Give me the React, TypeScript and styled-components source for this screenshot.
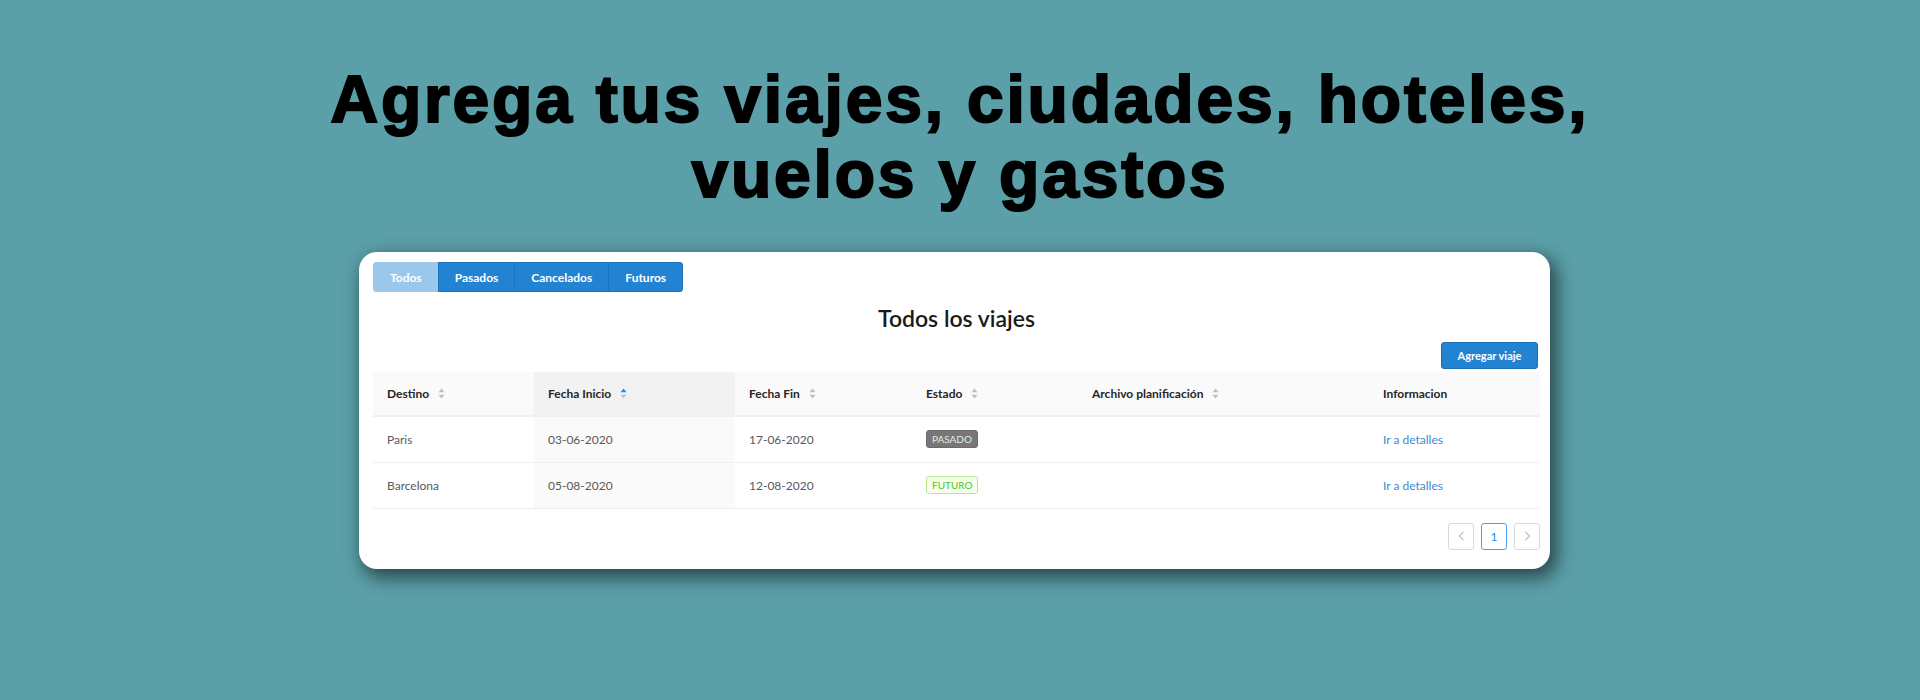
import React, { FC } from 'react';
import styled, { createGlobalStyle } from 'styled-components';

const colors = {
  page: '#5b9fa8',
  primary: '#2383d3',
  primaryLight: '#9bc8ea',
  link: '#3a8ad4',
  border: '#f0f0f0',
  headBg: '#fafafa',
  sortedBg: '#f2f2f2',
  text: '#595959',
  heading: '#262626',
};

const GlobalStyle = createGlobalStyle`
  body {
    margin: 0;
    background: ${colors.page};
    font-family: Lato, 'Noto Sans', sans-serif;
  }
`;

const Page = styled.div`
  min-height: 700px;
  display: flex;
  flex-direction: column;
  align-items: center;
  padding-top: 62px;
  box-sizing: border-box;
`;

const Headline = styled.h1`
  margin: 0;
  font-family: 'Liberation Sans', Arial, sans-serif;
  font-weight: 700;
  font-size: 66px;
  line-height: 75px;
  letter-spacing: 2.8px;
  text-align: center;
  color: #000;
  -webkit-text-stroke: 2px #000;
  width: 1400px;
`;

const Card = styled.div`
  margin-top: 40px;
  margin-right: 11px;
  width: 1191px;
  box-sizing: border-box;
  background: #fff;
  border-radius: 18px;
  padding: 10px 10px 19px 14px;
  box-shadow: 5px 7px 18px 2px rgba(0, 0, 0, 0.55);
  display: flex;
  flex-direction: column;
`;

const Tabs = styled.div`
  display: flex;
`;

const Tab = styled.button<{ $active?: boolean }>`
  height: 30px;
  padding: 0 16px;
  border: 1px solid ${(p) => (p.$active ? colors.primaryLight : '#1c74bd')};
  background: ${(p) => (p.$active ? colors.primaryLight : colors.primary)};
  color: #fff;
  font-family: Lato, sans-serif;
  font-weight: 700;
  font-size: 12px;
  margin-left: -1px;
  border-radius: 0;
  &:first-child {
    margin-left: 0;
    border-radius: 3px 0 0 3px;
  }
  &:last-child {
    border-radius: 0 3px 3px 0;
  }
`;

const Title = styled.h2`
  margin: 11px 0 0;
  font-size: 23px;
  line-height: 30px;
  font-weight: 600;
  text-align: center;
  color: #1a1a1a;
`;

const Actions = styled.div`
  display: flex;
  justify-content: flex-end;
  margin-top: 9px;
  padding-right: 2px;
`;

const PrimaryButton = styled.button`
  height: 27px;
  width: 97px;
  border: 1px solid #1a6fb8;
  border-radius: 3px;
  background: ${colors.primary};
  color: #fff;
  font-family: Lato, sans-serif;
  font-weight: 700;
  font-size: 11px;
`;

const Table = styled.table`
  margin-top: 3px;
  width: 1167px;
  border-collapse: collapse;
  table-layout: fixed;
  font-size: 12px;
`;

const Th = styled.th<{ $sorted?: boolean }>`
  height: 44px;
  padding: 0 14px;
  text-align: left;
  font-weight: 700;
  color: ${colors.heading};
  background: ${(p) => (p.$sorted ? colors.sortedBg : colors.headBg)};
  border-bottom: 2px solid ${colors.border};
  box-sizing: border-box;
`;

const Td = styled.td<{ $sorted?: boolean }>`
  height: 46px;
  padding: 0 14px;
  color: ${colors.text};
  background: ${(p) => (p.$sorted ? colors.headBg : '#fff')};
  border-bottom: 1px solid ${colors.border};
  box-sizing: border-box;
`;

const HeadInner = styled.span`
  display: inline-flex;
  align-items: center;
  gap: 9px;
`;

const Link = styled.a`
  color: ${colors.link};
  text-decoration: none;
`;

const Tag = styled.span<{ $kind: 'past' | 'future' }>`
  display: inline-block;
  height: 18px;
  line-height: 16px;
  padding: 0 5px;
  font-size: 10px;
  border-radius: 3px;
  box-sizing: border-box;
  border: 1px solid ${(p) => (p.$kind === 'past' ? '#6b6b6b' : '#b7eb8f')};
  background: ${(p) => (p.$kind === 'past' ? '#777' : '#f6ffed')};
  color: ${(p) => (p.$kind === 'past' ? '#e8e8e8' : '#52c41a')};
`;

const Pager = styled.div`
  display: flex;
  justify-content: flex-end;
  gap: 7px;
  margin-top: 14px;
`;

const PageItem = styled.div<{ $active?: boolean }>`
  width: 26px;
  height: 27px;
  box-sizing: border-box;
  border: 1px solid ${(p) => (p.$active ? '#4a9ff5' : '#d9d9d9')};
  border-radius: 3px;
  display: flex;
  align-items: center;
  justify-content: center;
  color: ${(p) => (p.$active ? '#1890ff' : '#bfbfbf')};
  font-size: 12px;
`;

const SortIcon: FC<{ active?: boolean }> = ({ active }) => (
  <svg width="7" height="11" viewBox="0 0 7 11">
    <path d="M3.5 0.5 L6.5 4.3 L0.5 4.3 Z" fill={active ? '#1890ff' : '#bfbfbf'} />
    <path d="M3.5 10.5 L6.5 6.7 L0.5 6.7 Z" fill="#bfbfbf" />
  </svg>
);

const Chevron: FC<{ dir: 'left' | 'right' }> = ({ dir }) => (
  <svg width="7" height="10" viewBox="0 0 7 10">
    <path
      d={dir === 'left' ? 'M5.5 1 L1.5 5 L5.5 9' : 'M1.5 1 L5.5 5 L1.5 9'}
      fill="none"
      stroke="#bfbfbf"
      strokeWidth="1.1"
    />
  </svg>
);

const columns = [
  { title: 'Destino', width: 161, sort: true },
  { title: 'Fecha Inicio', width: 201, sort: true, sorted: true },
  { title: 'Fecha Fin', width: 177, sort: true },
  { title: 'Estado', width: 166, sort: true },
  { title: 'Archivo planificación', width: 291, sort: true },
  { title: 'Informacion', width: 171 },
];

const trips = [
  { destino: 'Paris', inicio: '03-06-2020', fin: '17-06-2020', estado: 'past' as const },
  { destino: 'Barcelona', inicio: '05-08-2020', fin: '12-08-2020', estado: 'future' as const },
];

const App: FC = () => (
  <>
    <GlobalStyle />
    <Page>
      <Headline>
        Agrega tus viajes, ciudades, hoteles,
        <br />
        vuelos y gastos
      </Headline>
      <Card>
        <Tabs>
          <Tab $active>Todos</Tab>
          <Tab>Pasados</Tab>
          <Tab>Cancelados</Tab>
          <Tab>Futuros</Tab>
        </Tabs>
        <Title>Todos los viajes</Title>
        <Actions>
          <PrimaryButton>Agregar viaje</PrimaryButton>
        </Actions>
        <Table>
          <colgroup>
            {columns.map((c) => (
              <col key={c.title} style={{ width: c.width }} />
            ))}
          </colgroup>
          <thead>
            <tr>
              {columns.map((c) => (
                <Th key={c.title} $sorted={c.sorted}>
                  <HeadInner>
                    {c.title}
                    {c.sort && <SortIcon active={c.sorted} />}
                  </HeadInner>
                </Th>
              ))}
            </tr>
          </thead>
          <tbody>
            {trips.map((t) => (
              <tr key={t.destino}>
                <Td>{t.destino}</Td>
                <Td $sorted>{t.inicio}</Td>
                <Td>{t.fin}</Td>
                <Td>
                  <Tag $kind={t.estado}>{t.estado === 'past' ? 'PASADO' : 'FUTURO'}</Tag>
                </Td>
                <Td />
                <Td>
                  <Link href="#">Ir a detalles</Link>
                </Td>
              </tr>
            ))}
          </tbody>
        </Table>
        <Pager>
          <PageItem>
            <Chevron dir="left" />
          </PageItem>
          <PageItem $active>1</PageItem>
          <PageItem>
            <Chevron dir="right" />
          </PageItem>
        </Pager>
      </Card>
    </Page>
  </>
);

export default App;
